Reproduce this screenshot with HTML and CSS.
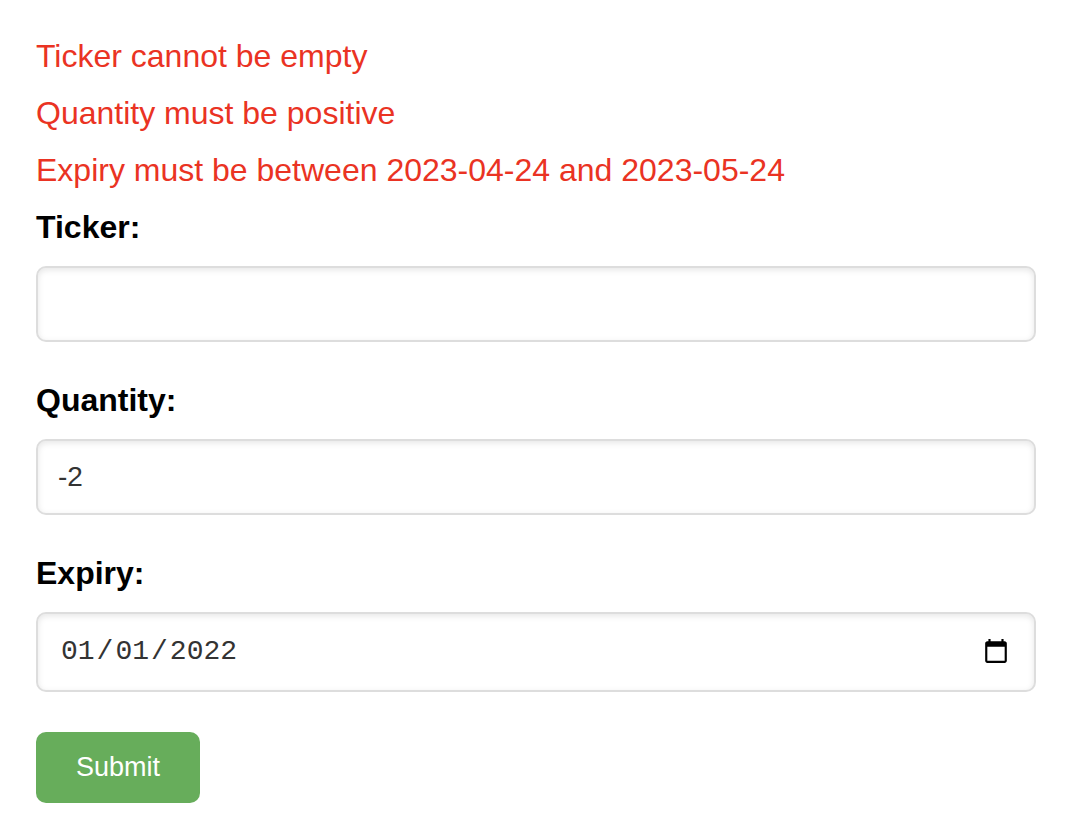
FILE: index.html
```html
<!DOCTYPE html>
<html lang="en">
<head>
<meta charset="utf-8">
<title>Order form</title>
<link rel="stylesheet" href="styles.css">
</head>
<body>
<main>
<div class="errors" role="alert">
<p class="error">Ticker cannot be empty</p>
<p class="error">Quantity must be positive</p>
<p class="error">Expiry must be between 2023-04-24 and 2023-05-24</p>
</div>
<form>
<label class="label" for="ticker">Ticker:</label>
<input class="field" id="ticker" name="ticker" type="text">
<label class="label" for="quantity">Quantity:</label>
<input class="field" id="quantity" name="quantity" type="text" inputmode="numeric" value="-2">
<label class="label" for="expiry">Expiry:</label>
<input class="field date" id="expiry" name="expiry" type="date" value="2022-01-01">
<button class="submit" type="submit">Submit</button>
</form>
</main>
</body>
</html>
```

FILE: styles.css
```css
* {
  box-sizing: border-box;
}

body {
  margin: 0;
  padding: 38px 38px 26px 36px;
  background: #fff;
  color: #000;
  font-family: "Liberation Sans", Arial, sans-serif;
  font-size: 32px;
  line-height: 37px;
}

.error {
  margin: 0 0 20px;
  color: #ea3323;
}

.label {
  display: block;
  margin-bottom: 20px;
  font-weight: bold;
}

.field {
  display: block;
  width: 100%;
  height: 76px;
  margin: 0 0 40px;
  padding: 20px;
  border: 2px solid #ddd;
  border-radius: 10px;
  background: #fff;
  box-shadow: inset 0 2px 6px rgba(0, 0, 0, 0.1);
  color: #333;
  font-family: inherit;
  font-size: 28px;
  line-height: 32px;
}

.date {
  height: 80px;
  padding: 20px 22px 20px 21px;
  font-family: "Liberation Mono", "Courier New", monospace;
}

.date::-webkit-datetime-edit-month-field,
.date::-webkit-datetime-edit-day-field,
.date::-webkit-datetime-edit-year-field {
  padding: 0 2px;
}

.date::-webkit-calendar-picker-indicator {
  width: 28px;
  height: 28px;
  padding: 2px;
}

.submit {
  padding: 20px 40px;
  border: 0;
  border-radius: 10px;
  background: #67ad5b;
  color: #fff;
  font-family: inherit;
  font-size: 27px;
  line-height: 31px;
}
```
